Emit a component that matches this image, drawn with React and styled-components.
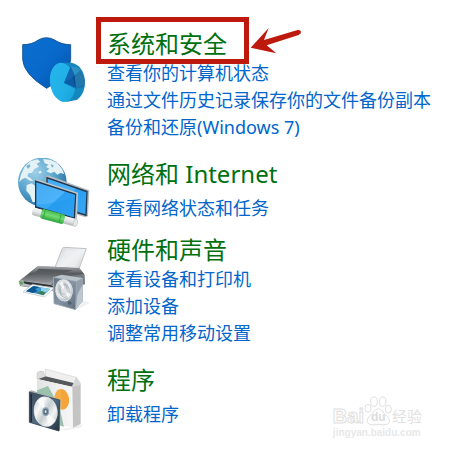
import styled, { createGlobalStyle } from "styled-components";

const categories = [
  {
    title: "系统和安全",
    icon: SecurityIcon,
    marked: true,
    links: [
      "查看你的计算机状态",
      "通过文件历史记录保存你的文件备份副本",
      "备份和还原(Windows 7)",
    ],
  },
  {
    title: "网络和 Internet",
    icon: NetworkIcon,
    links: ["查看网络状态和任务"],
  },
  {
    title: "硬件和声音",
    icon: HardwareIcon,
    links: ["查看设备和打印机", "添加设备", "调整常用移动设置"],
  },
  {
    title: "程序",
    icon: ProgramsIcon,
    links: ["卸载程序"],
  },
];

function App() {
  return (
    <>
      <GlobalStyle />
      <Panel>
        {categories.map(({ title, icon: CategoryIcon, marked, links }) => (
          <Category key={title}>
            <CategoryIcon />
            <Content $single={links.length === 1}>
              <Title>
                <a href="#">{title}</a>
                {marked && <Mark />}
                {marked && <Arrow />}
              </Title>
              <Links>
                {links.map((link) => (
                  <li key={link}>
                    <a href="#">{link}</a>
                  </li>
                ))}
              </Links>
            </Content>
          </Category>
        ))}
        <Watermark />
      </Panel>
    </>
  );
}

function Arrow() {
  return (
    <ArrowSvg viewBox="495 66 156 84" aria-hidden="true">
      <path
        d="M497 128 L551 69 L537 105 L638 75 Q647 74 648 80 Q649 86 641 90 L545 121 L574 145 Z"
        fill="#bd1a0d"
      />
    </ArrowSvg>
  );
}

function SecurityIcon() {
  return (
    <Icon viewBox="24 9 228 228" aria-hidden="true">
      <defs>
        <linearGradient id="shield" x1="0" y1="0" x2="1" y2="1">
          <stop offset="0" stopColor="#0b6fcf" />
          <stop offset="0.5" stopColor="#0869cb" />
          <stop offset="1" stopColor="#0552a8" />
        </linearGradient>
        <linearGradient id="disc" x1="0" y1="0" x2="1" y2="1">
          <stop offset="0" stopColor="#27b5ec" />
          <stop offset="0.6" stopColor="#20b0e6" />
          <stop offset="1" stopColor="#179fd8" />
        </linearGradient>
      </defs>
      <path
        d="M38 59 Q66 59 85 45 Q109 31 134 45 Q155 59 182 59 L182 103 Q180 150 110 190 Q40 147 38 103 Z"
        fill="url(#shield)"
        stroke="#0b4c8e"
        strokeWidth="2.5"
      />
      <path
        d="M160 113 L184 113 Q219 120 225 166 Q226 207 202 224 L169 231 Z"
        fill="#1487bf"
      />
      <ellipse cx="158" cy="172" rx="38" ry="59" fill="url(#disc)" transform="rotate(-8 158 172)" />
      <path d="M182 125 L162 174 L196 188 L198 184 Z" fill="#0b5ca6" />
      <path d="M180 125 Q197 140 200 160 L196 188 Z" fill="#0a4c8d" />
      <path d="M182 125 Q199 123 211 135 L194 153 Z" fill="#2c91c5" />
      <path d="M211 135 Q223 151 225 177 L198 187 L194 153 Z" fill="#2377ab" />
      <path d="M162 174 L196 188 L225 178 L221 187 L196 191 Z" fill="#1b6faf" />
      <path d="M162 174 L182 125 L192 153 Z" fill="#1266b2" />
    </Icon>
  );
}

function NetworkIcon() {
  return (
    <Icon viewBox="24 24 228 228" aria-hidden="true">
      <defs>
        <radialGradient id="globe" cx="0.35" cy="0.3" r="0.75">
          <stop offset="0" stopColor="#9fd0e8" />
          <stop offset="0.55" stopColor="#59a5cd" />
          <stop offset="1" stopColor="#236b9e" />
        </radialGradient>
        <linearGradient id="screen" x1="0" y1="0" x2="1" y2="1">
          <stop offset="0" stopColor="#43aaf4" />
          <stop offset="0.5" stopColor="#4db4fa" />
          <stop offset="0.52" stopColor="#2c9ef0" />
          <stop offset="1" stopColor="#38a8f6" />
        </linearGradient>
        <linearGradient id="plug" x1="0" y1="0" x2="0" y2="1">
          <stop offset="0" stopColor="#f7f7f7" />
          <stop offset="0.5" stopColor="#e2e5e6" />
          <stop offset="1" stopColor="#b1b7ba" />
        </linearGradient>
        <linearGradient id="cable" x1="0" y1="0" x2="0" y2="1">
          <stop offset="0" stopColor="#48ba4e" />
          <stop offset="0.45" stopColor="#72dc73" />
          <stop offset="1" stopColor="#2ba33b" />
        </linearGradient>
      </defs>
      <circle cx="97" cy="96" r="73" fill="url(#globe)" />
      <g fill="#e4f1f5">
        <path d="M32 76 L43 52 L61 34 L82 28 L91 35 L80 41 L87 50 L73 57 L66 69 L56 69 L52 79 L61 84 L70 93 L60 92 L46 83 L36 88 L28 97 Z" />
        <path d="M50 105 L65 100 L76 108 L84 122 L80 155 L68 157 L60 135 L49 122 Z" />
        <path d="M99 27 L121 29 L142 39 L156 56 L163 72 L151 69 L142 74 L133 65 L122 70 L109 64 L118 56 L108 51 L115 44 L104 40 Z" />
        <path d="M85 65 L92 62 L95 68 L88 71 Z" />
      </g>
      <path d="M49 48 L58 43 L62 48 L54 57 Z M122 42 L132 47 L126 53 Z" fill="#72b4d3" />
      <path d="M108 78 L114 76 L238 121 L234 198 L226 202 L108 165 Z" fill="#b6bdc2" />
      <path d="M109 80 L233 123 L230 199 L109 162 Z" fill="#23384b" />
      <path d="M113 86 L229 127 L226 193 L113 157 Z" fill="url(#screen)" />
      <path d="M75 91 L80 88 L204 128 L201 208 L194 209 L75 172 Z" fill="#bfc6cb" />
      <path d="M75 91 L199 131 L195 208 L75 173 Z" fill="#213449" />
      <path d="M79 97 L195 134 L191 202 L79 169 Z" fill="url(#screen)" />
      <path d="M79 164 Q137 160 194 141 L191 202 L79 169 Z" fill="#2099ee" opacity="0.45" />
      <g transform="rotate(15 134 200)">
        <rect x="65" y="190" width="139" height="23" rx="8" fill="url(#plug)" />
        <rect x="92" y="186" width="72" height="30" rx="7" fill="url(#cable)" />
        <path d="M102 189 V213 M151 189 V213" stroke="#2fac42" strokeWidth="3" />
        <ellipse cx="199" cy="202" rx="6" ry="11" fill="#e8eaea" stroke="#bfc4c6" strokeWidth="2" />
      </g>
    </Icon>
  );
}

function HardwareIcon() {
  return (
    <Icon viewBox="24 -3 228 228" aria-hidden="true">
      <defs>
        <linearGradient id="paper" x1="0" y1="0" x2="1" y2="1">
          <stop offset="0" stopColor="#d3d6d9" />
          <stop offset="0.5" stopColor="#f1f2f3" />
          <stop offset="1" stopColor="#c9cccf" />
        </linearGradient>
        <linearGradient id="printer" x1="0" y1="0" x2="0" y2="1">
          <stop offset="0" stopColor="#a7abae" />
          <stop offset="0.4" stopColor="#55595d" />
          <stop offset="1" stopColor="#a9adb0" />
        </linearGradient>
        <linearGradient id="lid" x1="0" y1="0" x2="0" y2="1">
          <stop offset="0" stopColor="#43474b" />
          <stop offset="1" stopColor="#8d9195" />
        </linearGradient>
        <linearGradient id="speaker" x1="0" y1="0" x2="1" y2="1">
          <stop offset="0" stopColor="#63717f" />
          <stop offset="0.5" stopColor="#8595a5" />
          <stop offset="1" stopColor="#5e6d7d" />
        </linearGradient>
        <radialGradient id="cone" cx="0.45" cy="0.4" r="0.65">
          <stop offset="0" stopColor="#ffffff" />
          <stop offset="0.35" stopColor="#b9bfc5" />
          <stop offset="0.65" stopColor="#eff1f2" />
          <stop offset="1" stopColor="#919ba5" />
        </radialGradient>
      </defs>
      <path d="M133 102 L157 40 Q159 36 165 37 L229 41 L204 110 Z" fill="url(#paper)" stroke="#a5a9ac" strokeWidth="2" />
      <path d="M151 89 L167 46 L214 49 L196 99 Z" fill="#edf0f1" opacity="0.6" />
      <path d="M83 94 L207 99 L224 119 L225 148 L139 170 L30 153 L26 139 Z" fill="#777c80" />
      <path d="M84 93 L137 95 L210 101 L222 117 L148 130 L118 151 L31 137 Z" fill="url(#printer)" />
      <path d="M87 101 L188 106 L147 119 L112 143 L54 133 Z" fill="url(#lid)" opacity="0.8" />
      <path d="M31 136 L119 148 L139 154 L137 169 L33 152 Q27 150 27 142 Z" fill="#b9bdc0" />
      <path d="M41 139 L123 150 L135 157 L60 149 L41 145 Z" fill="#303438" />
      <path d="M29 139 L38 140 L38 149 L29 147 Z" fill="#5d9f56" />
      <path d="M67 148 L132 159 L104 186 L39 171 Z" fill="#f4f7f8" stroke="#a5b0b6" strokeWidth="1.5" />
      <path d="M70 153 L121 162 L100 181 L48 169 Z" fill="#3896cf" />
      <path d="M70 153 L88 156 L75 163 L83 169 L69 174 L48 169 Z" fill="#0d5790" />
      <path d="M93 157 L121 162 L109 172 L93 168 Z" fill="#8fd1e9" />
      <path d="M80 173 L96 168 L106 175 L100 181 Z" fill="#417d4b" />
      <path d="M205 220 L219 197 L240 203 L211 219 Z" fill="#eff0f1" />
      <path d="M130 127 L155 119 L218 129 L218 198 L197 224 L132 206 Z" fill="#bac2c9" />
      <path d="M130 127 L199 139 L197 224 L132 206 Z" fill="url(#speaker)" stroke="#aab3bb" strokeWidth="2" />
      <path d="M199 139 L218 130 L218 198 L197 224 Z" fill="#929faa" />
      <path d="M202 180 L218 148 L218 198 L197 224 Z" fill="#bdc7cf" />
      <ellipse cx="162" cy="166" rx="25" ry="32" fill="url(#cone)" stroke="#dee2e5" strokeWidth="3" transform="rotate(-8 162 166)" />
      <ellipse cx="164" cy="168" rx="14" ry="19" fill="none" stroke="#949da5" strokeWidth="2" />
      <path d="M164 168 L146 145 L159 138 Z M164 168 L183 178 L175 190 Z" fill="#ffffff" opacity="0.75" />
      <circle cx="163" cy="168" r="8" fill="#dfe3e5" />
      <ellipse cx="179" cy="204" rx="6" ry="5" fill="#53616f" />
    </Icon>
  );
}

function ProgramsIcon() {
  return (
    <Icon viewBox="9 12 228 228" aria-hidden="true">
      <defs>
        <linearGradient id="box" x1="0" y1="0" x2="1" y2="0">
          <stop offset="0" stopColor="#e3e3e3" />
          <stop offset="1" stopColor="#f7f7f7" />
        </linearGradient>
        <linearGradient id="case" x1="0" y1="0" x2="1" y2="1">
          <stop offset="0" stopColor="#3c4c5b" />
          <stop offset="0.5" stopColor="#526b80" />
          <stop offset="1" stopColor="#263541" />
        </linearGradient>
        <linearGradient id="cd" x1="0" y1="0" x2="1" y2="1">
          <stop offset="0" stopColor="#bfc5c9" />
          <stop offset="0.3" stopColor="#f7f8f8" />
          <stop offset="0.5" stopColor="#c6cccf" />
          <stop offset="0.7" stopColor="#f3f4f5" />
          <stop offset="1" stopColor="#b4bcc1" />
        </linearGradient>
      </defs>
      <path d="M133 211 L174 202 L205 192 L197 202 L153 211 Z" fill="#eeeeee" />
      <path d="M91 27 L184 52 L184 68 L168 76 L91 54 Z" fill="#efefef" stroke="#c8c8c8" strokeWidth="1.5" />
      <path d="M68 57 L91 49 L185 71 L171 81 Z" fill="#55595b" />
      <path d="M66 57 L172 80 L174 203 L66 178 Z" fill="url(#box)" />
      <path d="M66 91 L99 78 L117 111 L135 150 L147 200 L66 178 Z" fill="#9ac2ad" />
      <path d="M172 80 L197 72 L197 192 L174 203 Z" fill="#c4c4c4" />
      <ellipse cx="140" cy="118" rx="22" ry="31" fill="#f6ad43" transform="rotate(-7 140 118)" />
      <path d="M137 88 Q159 92 162 118 Q160 147 143 149 Z" fill="#f39c2f" opacity="0.55" />
      <path d="M66 57 L66 38 L75 33 L85 34 L91 49 Z" fill="#dcdcdc" stroke="#c2c2c2" strokeWidth="1.5" />
      <path d="M170 80 L184 50 L197 69 L197 76 Z" fill="#d5d5d5" />
      <path d="M42 94 L49 91 L137 119 L135 211 L130 214 L42 187 Z" fill="#a2acb3" />
      <path d="M43 96 L134 120 L132 213 L43 187 Z" fill="url(#case)" stroke="#2e3c48" strokeWidth="2" />
      <path d="M46 101 L51 102 L51 187 L46 186 Z" fill="#202c37" />
      <ellipse cx="92" cy="155" rx="35" ry="45" fill="url(#cd)" stroke="#dfe3e4" strokeWidth="1.5" transform="rotate(-8 92 155)" />
      <path d="M92 155 L66 123 Q75 111 84 112 Z M92 155 L121 181 Q112 196 101 198 Z" fill="#ffffff" opacity="0.7" />
      <ellipse cx="92" cy="155" rx="10" ry="13" fill="#8da1b1" />
      <ellipse cx="92" cy="155" rx="7" ry="9" fill="#526c82" />
      <ellipse cx="92" cy="155" rx="3" ry="4" fill="#dce4e8" />
    </Icon>
  );
}

function Watermark() {
  return (
    <WatermarkBox>
      <Brand>
        <BrandText>Bai</BrandText>
        <Paw>
          <svg viewBox="0 0 84 90" aria-hidden="true">
            <g fill="#ffffff" stroke="#e0e0e0" strokeWidth="3">
              <ellipse cx="12" cy="37" rx="9" ry="12" />
              <ellipse cx="30" cy="17" rx="10" ry="14" />
              <ellipse cx="56" cy="17" rx="10" ry="14" />
              <ellipse cx="73" cy="39" rx="9" ry="12" />
              <path d="M43 38 Q51 38 57 48 Q62 55 71 62 Q81 75 71 84 Q63 89 43 85 Q23 89 14 84 Q4 75 15 62 Q24 55 29 48 Q35 38 43 38 Z" />
            </g>
          </svg>
          <span>du</span>
        </Paw>
        <BrandName>经验</BrandName>
      </Brand>
      <Site>jingyan.baidu.com</Site>
    </WatermarkBox>
  );
}

const GlobalStyle = createGlobalStyle`
  * {
    box-sizing: border-box;
  }
  body {
    margin: 0;
    background: #ffffff;
    font-family: "Noto Sans", "Noto Sans CJK SC", sans-serif;
  }
  a {
    color: inherit;
    text-decoration: none;
  }
  a:hover {
    text-decoration: underline;
  }
`;

const Panel = styled.main`
  position: relative;
  display: flex;
  flex-direction: column;
  gap: 12px;
  min-height: 100vh;
  padding: 28px 16px 20px 18px;
`;

const Category = styled.section`
  display: flex;
  align-items: flex-start;
  gap: 13px;
`;

const Icon = styled.svg`
  flex: none;
  width: 76px;
  height: 76px;
  margin-bottom: -12px;
`;

const Content = styled.div`
  display: flex;
  flex-direction: column;
  gap: ${(props) => (props.$single ? "5px" : "0")};
  padding-bottom: ${(props) => (props.$single ? "0" : "5px")};
`;

const Title = styled.h2`
  position: relative;
  align-self: flex-start;
  margin: 0;
  color: #00700f;
  font-size: 24px;
  font-weight: 400;
  line-height: 32px;
  white-space: nowrap;
`;

const Links = styled.ul`
  margin: 0;
  padding: 0;
  list-style: none;
  color: #0066cc;
  font-size: 18px;
  line-height: 27px;
`;

const Mark = styled.span`
  position: absolute;
  top: -11px;
  left: -11px;
  width: 153px;
  height: 47px;
  border: 5px solid #bd1a0d;
  pointer-events: none;
`;

const ArrowSvg = styled.svg`
  position: absolute;
  top: -1px;
  left: 143px;
  width: 52px;
  height: 28px;
`;

const WatermarkBox = styled.div`
  position: absolute;
  right: 28px;
  bottom: 10px;
  font-family: "Liberation Sans", "Noto Sans CJK SC", sans-serif;
  font-weight: 700;
  pointer-events: none;
`;

const Brand = styled.div`
  display: flex;
  align-items: flex-end;
`;

const BrandText = styled.span`
  color: #ffffff;
  font-size: 20px;
  line-height: 20px;
  -webkit-text-stroke: 1px #e0e0e0;
`;

const Paw = styled.span`
  position: relative;
  width: 28px;
  height: 30px;

  svg {
    display: block;
    width: 28px;
    height: 30px;
  }
  span {
    position: absolute;
    bottom: 1px;
    left: 7px;
    color: #dcdcdc;
    font-size: 12px;
    line-height: 16px;
  }
`;

const BrandName = styled.span`
  color: #e2e2e2;
  font-size: 15px;
  font-weight: 400;
  line-height: 18px;
`;

const Site = styled.div`
  color: #e8e8e8;
  font-size: 10px;
  line-height: 14px;
`;

export default App;
